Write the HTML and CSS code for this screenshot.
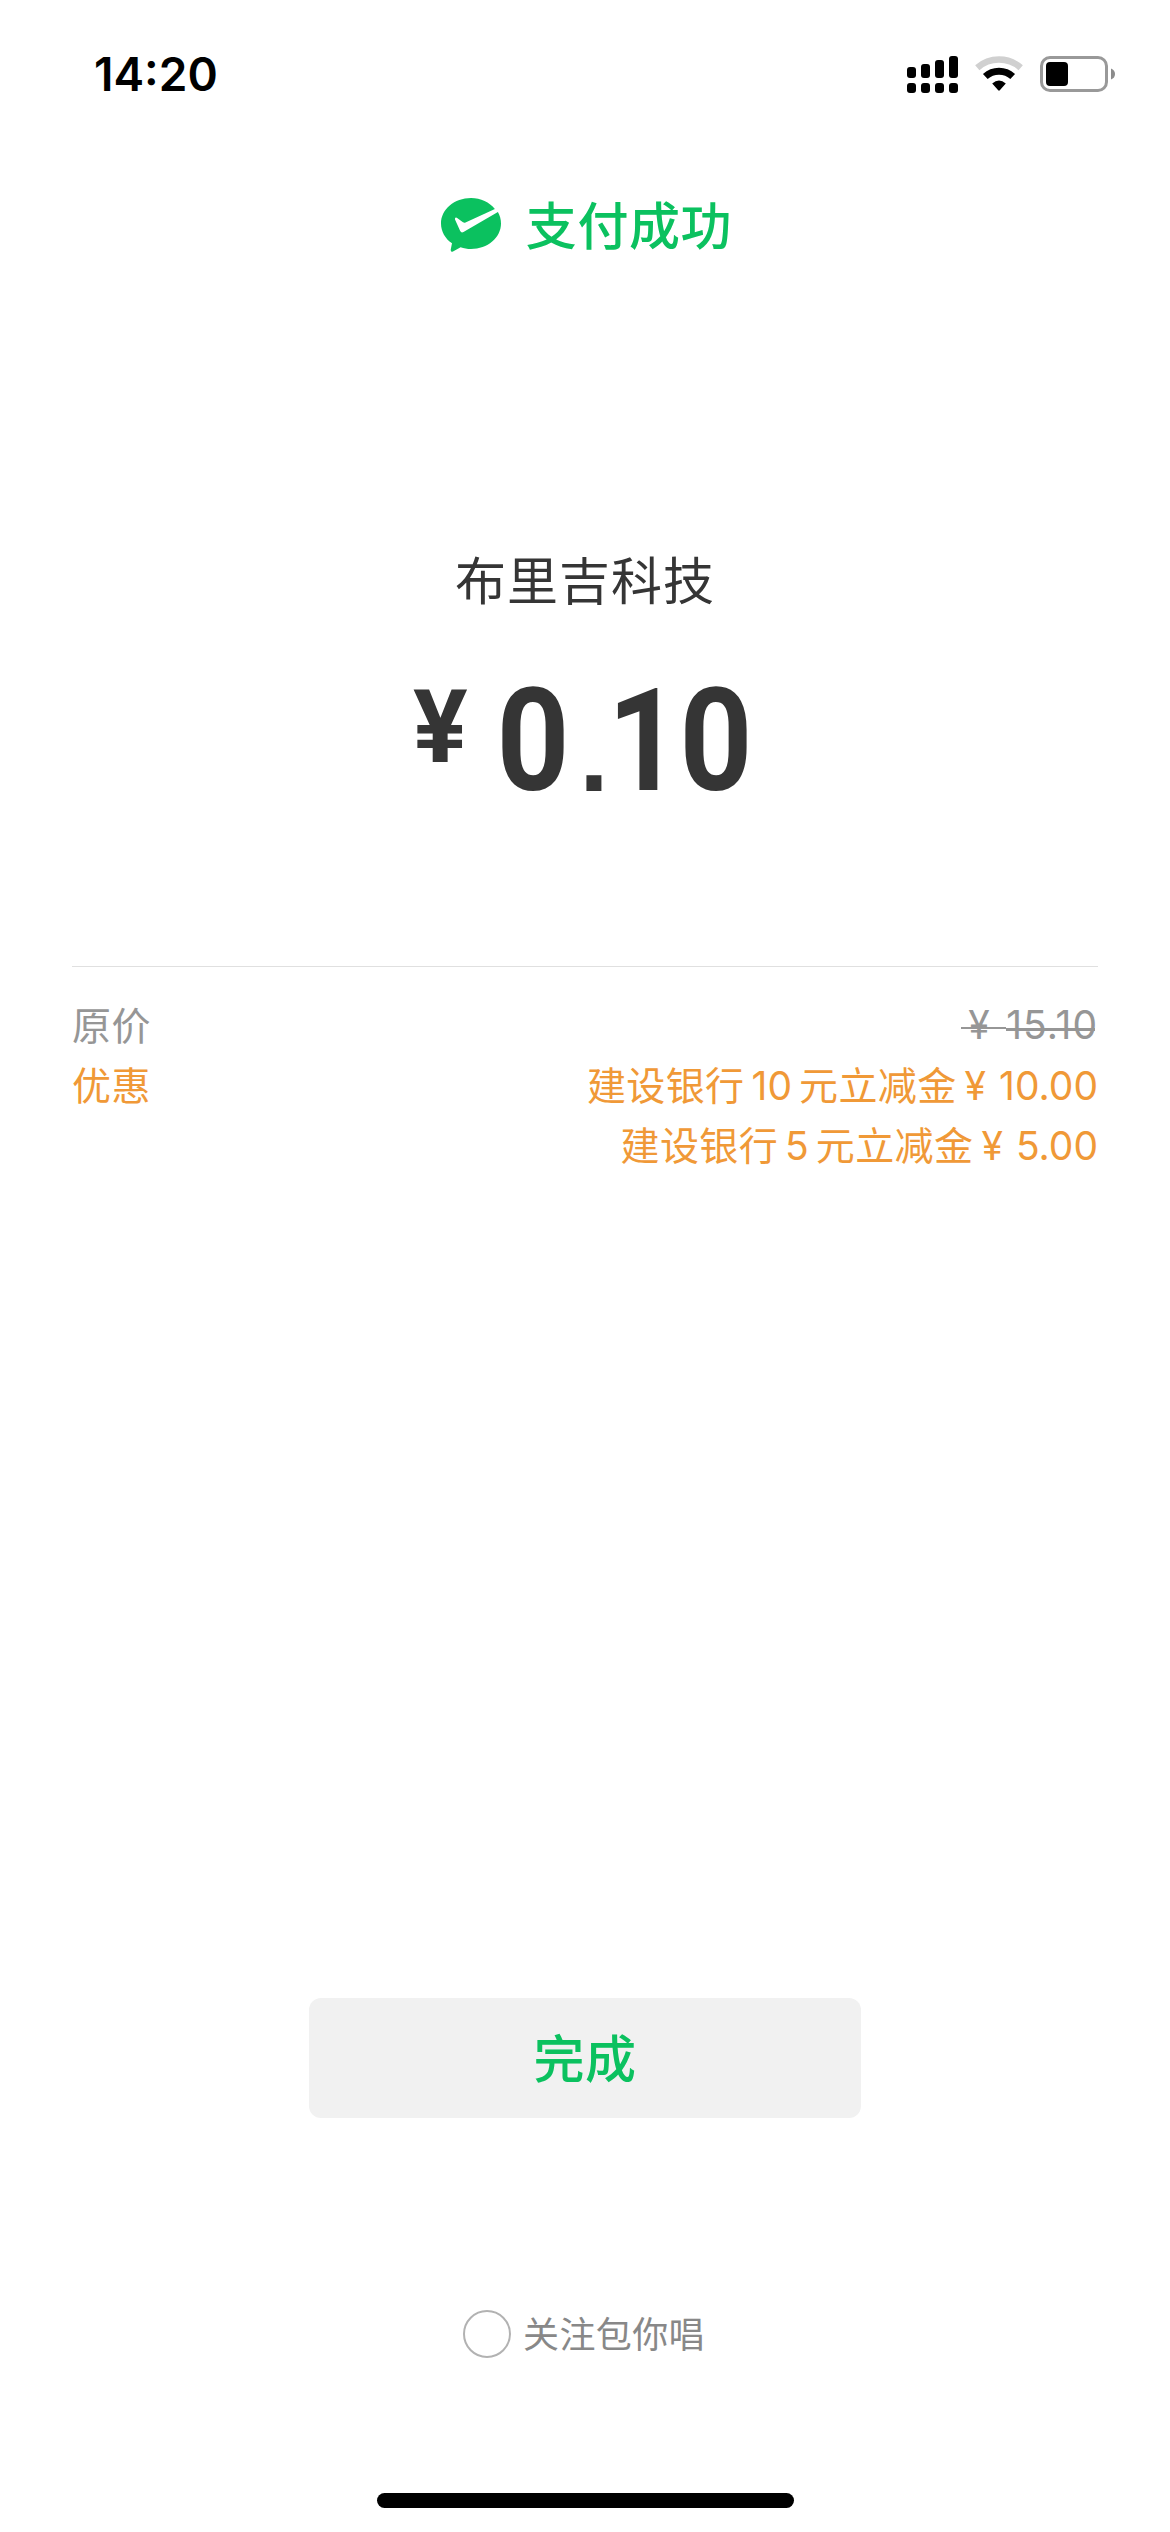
FILE: index.html
```html
<!DOCTYPE html>
<html lang="zh-CN">
<head>
<meta charset="utf-8">
<title>支付成功</title>
<link rel="stylesheet" href="styles.css">
</head>
<body>
<div class="screen">
  <header class="status">
    <span class="time">14<span class="colon">:</span>20</span>
    <svg class="status-icons" viewBox="0 0 210 40" width="210" height="40">
      <g fill="#000">
        <rect x="1" y="13" width="9" height="11" rx="3"/>
        <rect x="15" y="10" width="9" height="14" rx="3"/>
        <rect x="29" y="6" width="9" height="18" rx="3"/>
        <rect x="43" y="2" width="9" height="22" rx="3"/>
        <rect x="1" y="29" width="9" height="10" rx="3"/>
        <rect x="15" y="29" width="9" height="10" rx="3"/>
        <rect x="29" y="29" width="9" height="10" rx="3"/>
        <rect x="43" y="29" width="9" height="10" rx="3"/>
      </g>
      <g fill="none">
        <path d="M71.300 13.700A33 33 0 0 1 114.700 13.700" stroke="#d0d0d0" stroke-width="6.500"/>
        <path d="M79.300 22.500A20.500 20.500 0 0 1 106.700 22.500" stroke="#000" stroke-width="7"/>
      </g>
      <path d="M86.200 29.600Q93 23.500 99.800 29.600L93.800 36.300Q93 37.200 92.200 36.300Z" fill="#000"/>
      <rect x="135.500" y="3.500" width="65" height="33" rx="8.500" fill="none" stroke="#999" stroke-width="3"/>
      <rect x="140" y="8" width="22" height="24" rx="4" fill="#000"/>
      <path d="M205 14.500Q209 16 209 20T205 25.500Z" fill="#8c8c8c"/>
    </svg>
  </header>

  <div class="result">
    <svg class="pay-logo" viewBox="0 0 62 56" width="62" height="56">
      <path d="M31 1C14.400 1 1 12.400 1 26.500C1 34.500 5.200 41.700 12 46.300L10.700 52.800Q10.600 55.600 13 54.400L20.600 50.200C23.900 51.400 27.300 52 31 52C47.600 52 61 40.600 61 26.500C61 22.300 59.900 18.400 57.900 14.900L23.500 35Q21.300 36.300 20.200 34L15 22.400Q14.600 20 16.800 20.700L23 25.300Q24.200 26 25.500 25.500L54.900 11.900C49.500 5.300 40.800 1 31 1Z" fill="#0bc15f"/>
    </svg>
    <h1 class="result-text">支付成功</h1>
  </div>

  <div class="merchant">布里吉科技</div>
  <div class="amount">
    <span class="currency">¥</span>
    <span class="digits"><span class="digit">0</span><span class="point">.</span><span class="digit">1</span><span class="digit">0</span></span>
  </div>

  <section class="details">
    <div class="row muted"><span>原价</span><span class="old"><span class="old-sign">¥</span><span class="old-num">15.10</span></span></div>
    <div class="row offer"><span>优惠</span><span>建设银行<span class="count">10</span>元立减金<span class="sign">¥</span><span class="num">10.00</span></span></div>
    <div class="row offer"><span></span><span>建设银行<span class="count">5</span>元立减金<span class="sign">¥</span><span class="num">5.00</span></span></div>
  </section>

  <button class="done">完成</button>
  <label class="follow"><span class="radio"></span><span class="follow-text">关注包你唱</span></label>
  <div class="home-bar"></div>
</div>
</body>
</html>
```

FILE: styles.css
```css
* { box-sizing: border-box; }
body { margin: 0; background: #fff; }
.screen {
  width: 1170px;
  height: 2532px;
  display: flex;
  flex-direction: column;
  align-items: center;
  background: #fff;
  font-family: Inter, "Noto Sans CJK SC", sans-serif;
}
.status {
  width: 100%;
  height: 148px;
  padding: 54px 54px 0 94px;
  display: flex;
  justify-content: space-between;
  align-items: flex-start;
}
.time { font-size: 46px; font-weight: 600; line-height: 40px; color: #000; }
.colon { position: relative; top: -1px; }
.status-icons { display: block; }
.result {
  margin: 43px 0 0 2px;
  height: 68px;
  display: flex;
  align-items: center;
  gap: 24px;
}
.result-text {
  margin: 0;
  padding-bottom: 4px;
  font: 500 51px/64px "Noto Sans CJK SC", sans-serif;
  letter-spacing: .6px;
  color: #0bc15f;
}
.merchant {
  margin-top: 284px;
  font: 400 51px/70px "Noto Sans CJK SC", sans-serif;
  letter-spacing: 1px;
  color: #353535;
}
.amount {
  margin: 53px 0 0 1px;
  width: 345px;
  height: 150px;
  display: flex;
  align-items: flex-start;
  justify-content: space-between;
  color: #353535;
  font-family: Roboto, sans-serif;
}
.currency { font-size: 102px; line-height: 122px; font-weight: 700; }
.digits {
  display: grid;
  grid-template-columns: 81px 40px 60px 84px;
  justify-items: center;
  font-size: 143px;
  font-weight: 700;
  line-height: 150px;
}
.digit { transform: scaleX(.89); }
.point { font: 700 106px/150px "Liberation Sans", sans-serif; padding-top: 13px; }
.details {
  width: 1026px;
  margin-top: 150px;
  padding-top: 26px;
  border-top: 1px solid #e0e0e0;
}
.row {
  display: flex;
  justify-content: space-between;
  height: 60px;
  font: 400 39px/60px "Noto Sans CJK SC", sans-serif;
  letter-spacing: .4px;
}
.muted { color: #969696; }
.offer { color: #f09937; }
.count, .num, .sign, .old { font-family: Inter, sans-serif; letter-spacing: 0; }
.count { padding: 0 7px; }
.sign { margin-left: 8px; }
.num { margin-left: 13px; }
.old { display: flex; }
.old-sign {
  width: 45px;
  padding: 2px 0 0 7px;
  background: linear-gradient(#969696, #969696) 0 34px / 100% 2px no-repeat;
}
.old-num {
  padding-top: 2px;
  letter-spacing: 1px;
  background: linear-gradient(#969696, #969696) 0 35px / calc(100% - 3px) 3px no-repeat;
}
.done {
  margin-top: 825px;
  width: 552px;
  height: 120px;
  padding: 0 0 4px;
  border: 0;
  border-radius: 12px;
  background: #f1f1f1;
  color: #0bc15f;
  font: 500 51px/116px "Noto Sans CJK SC", sans-serif;
  letter-spacing: .5px;
}
.follow {
  margin-top: 192px;
  height: 48px;
  margin-right: 2px;
  display: flex;
  align-items: center;
  gap: 12px;
  font: 400 36px/44px "Noto Sans CJK SC", sans-serif;
  letter-spacing: .4px;
  color: #888;
}
.follow-text { padding-bottom: 4px; }
.radio { width: 48px; height: 48px; border: 2px solid #b2b2b2; border-radius: 50%; }
.home-bar { margin-top: 135px; width: 417px; height: 15px; border-radius: 8px; background: #000; }
```
